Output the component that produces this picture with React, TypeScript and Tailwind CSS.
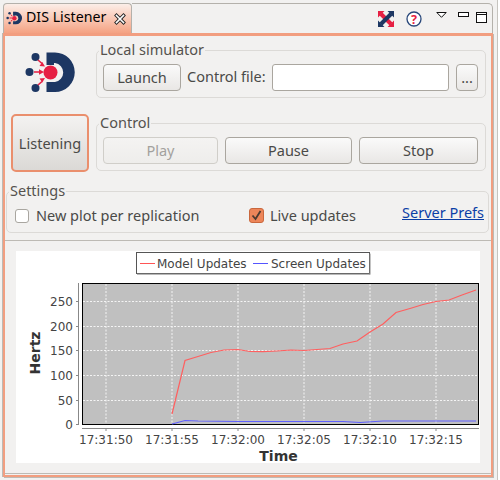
import type { ReactNode } from "react"

const uiFont = { fontFamily: '"Noto Sans", sans-serif' }

const redLine: [number, number][] = [
  [172, 414], [185, 360.5], [198, 356.5], [211, 352.5], [224, 350], [238, 349.5], [250, 351.5], [263, 351.7],
  [277, 351], [291, 350], [304, 350.5], [317, 349.5], [330, 348.5], [343, 344], [357, 341], [370, 332],
  [383, 324], [396, 312.5], [410, 308.5], [423, 304.5], [436, 301.5], [449, 300], [462, 295], [476, 290],
]
const blueLine: [number, number][] = [
  [172, 424], [185, 420.5], [198, 421], [238, 421.5], [343, 421.5], [360, 422.5], [383, 421], [476, 421],
]

const yTicks = [
  { label: "250", y: 301.5 },
  { label: "200", y: 326.5 },
  { label: "150", y: 350.5 },
  { label: "100", y: 375.5 },
  { label: "50", y: 400.5 },
  { label: "0", y: 424.5 },
]
const xTicks = [
  { label: "17:31:50", x: 106 },
  { label: "17:31:55", x: 172 },
  { label: "17:32:00", x: 238 },
  { label: "17:32:05", x: 304 },
  { label: "17:32:10", x: 370 },
  { label: "17:32:15", x: 436 },
]

function toPoints(line: [number, number][]) {
  return line.map(([x, y]) => `${x - 16},${y - 251}`).join(" ")
}

function Logo({ className }: { className: string }) {
  return (
    <svg viewBox="25 48 52 44" className={className}>
      <path
        d="M46.5 50.5H55A19.75 19.75 0 0 1 55 90H46.5V80H55A9.6 9.6 0 0 0 55 61H54V63H46.5Z"
        fill="#1d3763"
      />
      <circle cx="35.5" cy="55" r="4" fill="#1d3763" />
      <circle cx="29.5" cy="70" r="4" fill="#1d3763" />
      <circle cx="35.5" cy="86" r="4" fill="#1d3763" />
      <circle cx="50.5" cy="70.5" r="7" fill="#e61f43" />
      <path d="M38 58l4 3.5M34 70h6M38 83l4-3.5" stroke="#e61f43" strokeWidth="1.6" fill="none" />
      <path d="M45 64.5l-5.5-.5 2.8-4zM44 70l-5-2.8v5.6zM45 76l-5.5.5 2.8 4z" fill="#e61f43" />
    </svg>
  )
}

function Group({ label, className, children }: { label: string; className: string; children: ReactNode }) {
  return (
    <div className={`relative rounded-[5px] border border-[#dcdad7] ${className}`}>
      <span className="absolute left-[2px] top-[-12px] bg-[#f2f1f0] px-px text-[14.5px] leading-[20px] text-[#55524e]">
        {label}
      </span>
      {children}
    </div>
  )
}

function Button({ className, disabled, children }: { className: string; disabled?: boolean; children: ReactNode }) {
  return (
    <button
      className={`h-[27px] rounded-[4px] border bg-gradient-to-b text-[14.5px] ${
        disabled
          ? "border-[#d0cec9] from-[#f4f3f2] to-[#eeedeb] text-[#a3a19d]"
          : "border-[#aaa69f] from-[#fafafa] to-[#e9e7e5] text-[#4a4a48]"
      } ${className}`}>
      {children}
    </button>
  )
}

function Chart() {
  return (
    <svg width="464" height="212" className="block" style={{ fontFamily: '"DejaVu Sans", sans-serif' }}>
      <rect width="464" height="212" fill="#fff" />
      {/* legend */}
      <rect x="120.5" y="1.5" width="233" height="21" fill="#fff" stroke="#555" strokeWidth="1" />
      <path d="M121 22.5H354M354 2V23" stroke="#888" strokeWidth="1" fill="none" transform="translate(0 .6)" />
      <line x1="124" x2="139" y1="12.5" y2="12.5" stroke="#ff5555" />
      <text x="141" y="16.5" fontSize="12" fill="#444">Model Updates</text>
      <line x1="237" x2="252" y1="12.5" y2="12.5" stroke="#5555ff" />
      <text x="255" y="16.5" fontSize="12" fill="#444">Screen Updates</text>

      {/* plot */}
      <rect x="66.5" y="32.5" width="396" height="141" fill="#c0c0c0" stroke="#000" />
      {yTicks.map(t => (
        <g key={t.label}>
          {t.label !== "0" && (
            <line x1="67" x2="462" y1={t.y - 251} y2={t.y - 251} stroke="#f4f4f4" strokeDasharray="2 1.5" />
          )}
          <line x1="60" x2="63" y1={t.y - 251} y2={t.y - 251} stroke="#888" />
          <text x="57" y={t.y - 251 + 4} fontSize="12" textAnchor="end" fill="#444">
            {t.label}
          </text>
        </g>
      ))}
      {xTicks.map(t => (
        <g key={t.label}>
          <line x1={t.x - 16} x2={t.x - 16} y1="33" y2="173" stroke="#f4f4f4" strokeDasharray="2 1.5" />
          <line x1={t.x - 16} x2={t.x - 16} y1="177" y2="180" stroke="#888" />
          <text x={t.x - 16} y="193" fontSize="12" textAnchor="middle" fill="#444">
            {t.label}
          </text>
        </g>
      ))}
      <line x1="62.5" x2="62.5" y1="32" y2="173" stroke="#888" />
      <line x1="66" x2="463" y1="177.5" y2="177.5" stroke="#888" />
      <polyline points={toPoints(blueLine)} fill="none" stroke="#5f5fff" strokeWidth="1.2" />
      <polyline points={toPoints(redLine)} fill="none" stroke="#ff5f5f" strokeWidth="1.2" />
      <text x="262.5" y="210" fontSize="14" fontWeight="700" textAnchor="middle" fill="#333">
        Time
      </text>
      <text
        x="0"
        y="0"
        fontSize="14"
        fontWeight="700"
        textAnchor="middle"
        fill="#333"
        transform="translate(24 102) rotate(-90)">
        Hertz
      </text>
    </svg>
  )
}

export default function App() {
  return (
    <div
      className="h-[480px] w-[498px] overflow-hidden border-r border-[#c6c4bf] bg-[#f2f1f0] pl-[3px] pt-[3px]"
      style={uiFont}>
      {/* Tab strip */}
      <div className="flex h-[30px] w-[490px]">
        <div className="flex w-[129px] shrink-0 items-center rounded-t-[4px] border-x border-t border-[#b4b1ab] bg-gradient-to-b from-[#fbeee8] to-[#f4a283] pb-[2px] pl-[2px]">
          <Logo className="h-[14px] w-[17px] shrink-0" />
          <span className="ml-[3px] whitespace-nowrap text-[14.2px] leading-none text-black">DIS Listener</span>
          <svg viewBox="0 0 12 12" className="ml-[8px] mt-[2px] h-[12px] w-[12px] shrink-0">
            <path d="M2.5 2.5l7 7M9.5 2.5l-7 7" stroke="#222" strokeWidth="3.4" strokeLinecap="square" />
            <path d="M2.5 2.5l7 7M9.5 2.5l-7 7" stroke="#fff" strokeWidth="1.6" strokeLinecap="square" />
          </svg>
        </div>
        <div className="flex flex-1 items-start rounded-tr-[5px] border-r border-t border-[#b4b1ab]">
          <svg viewBox="0 0 16 16" className="ml-[246px] mt-[7px] h-[16px] w-[16px]">
            <path d="M3 3l10 10" stroke="#e61f43" strokeWidth="4" />
            <path d="M0 0h6.500L0 6.500zM16 16h-6.500L16 9.500z" fill="#e61f43" />
            <path d="M3 13L13 3" stroke="#1d3763" strokeWidth="4" />
            <path d="M16 0v6.500L9.500 0zM0 16v-6.500L6.500 16z" fill="#1d3763" />
          </svg>
          <svg viewBox="0 0 16 16" className="ml-[12px] mt-[7px] h-[16px] w-[16px]">
            <circle cx="8" cy="8" r="7" fill="#fff" stroke="#28477a" strokeWidth="1.300" />
            <text x="8" y="12.500" fontSize="12.500" fontWeight="700" textAnchor="middle" fill="#e61f43">
              ?
            </text>
          </svg>
          <svg viewBox="0 0 11 6" className="ml-[14px] mt-[8px] h-[6px] w-[11px]">
            <path d="M.8.5h9.400L5.500 5.300z" fill="#fff" stroke="#111" />
          </svg>
          <svg viewBox="0 0 11 5" className="ml-[11px] mt-[8px] h-[5px] w-[11px]">
            <rect x=".5" y=".5" width="10" height="4" fill="#fff" stroke="#111" />
          </svg>
          <svg viewBox="0 0 11 11" className="ml-[7px] mt-[8px] h-[11px] w-[11px]">
            <rect x=".5" y=".5" width="10" height="10" fill="#fff" stroke="#111" />
            <line x1="0" x2="11" y1="2.500" y2="2.500" stroke="#111" />
          </svg>
        </div>
      </div>

      {/* View body */}
      <div className="h-[444px] w-[490px] border-[2px] border-t-[3px] border-[#f29e80] shadow-[1px_1px_0_#bdbab4,-1px_0_0_#bdbab4]">
        <div className="flex h-[204px] flex-col pl-px">
          {/* Local simulator row */}
          <div className="flex pt-[14px]">
            <div className="w-[90px] shrink-0 pl-[19px]">
              <Logo className="h-[44px] w-[52px]" />
            </div>
            <Group label="Local simulator" className="flex h-[48px] w-[390px] items-end pb-[6px] pl-[6px]">
              <Button className="w-[78px]">Launch</Button>
              <span className="mb-[3px] ml-[6px] w-[85px] text-[14.5px] text-[#4a4a48]">Control file:</span>
              <div className="h-[27px] w-[177px] rounded-[3px] border border-[#aaa69f] bg-white" />
              <Button className="ml-[7px] w-[22px]">...</Button>
            </Group>
          </div>

          {/* Listening and control row */}
          <div className="mt-[16px] flex">
            <button className="ml-[5px] h-[58px] w-[78px] rounded-[5px] border-[2px] border-[#ea8f6d] bg-gradient-to-b from-[#f3f2f1] to-[#dbd9d6] pt-px text-[14.5px] text-[#4a4a48]">
              Listening
            </button>
            <Group label="Control" className="ml-[7px] mt-[9px] flex h-[48px] w-[390px] items-end gap-[7px] pb-[6px] pl-[6px]">
              <Button disabled className="w-[115px]">Play</Button>
              <Button className="w-[127px]">Pause</Button>
              <Button className="w-[119px]">Stop</Button>
            </Group>
          </div>

          {/* Settings */}
          <Group label="Settings" className="mt-[19px] flex h-[42px] w-[483px] items-center pt-[7px]">
            <span className="ml-[8px] h-[14px] w-[14px] rounded-[3px] border border-[#a9a6a0] bg-white" />
            <span className="ml-[7px] w-[213px] text-[14.5px] text-[#4a4a48]">New plot per replication</span>
            <svg viewBox="0 0 15 15" className="h-[15px] w-[15px]">
              <rect x=".5" y=".5" width="14" height="14" rx="2.500" fill="#ed8559" stroke="#c9673d" />
              <path d="M3.500 7.500l3 3.500 5-8" fill="none" stroke="#4c3a30" strokeWidth="1.800" />
            </svg>
            <span className="ml-[6px] w-[132px] text-[14.5px] text-[#4a4a48]">Live updates</span>
            <span className="mb-[6px] text-[14.5px] text-[#0b3ea6] underline">Server Prefs</span>
          </Group>
        </div>

        {/* Chart panel */}
        <div className="h-[234px] border-y border-[#bdbab4] pl-[11px] pt-[10px]">
          <Chart />
        </div>
      </div>
    </div>
  )
}
